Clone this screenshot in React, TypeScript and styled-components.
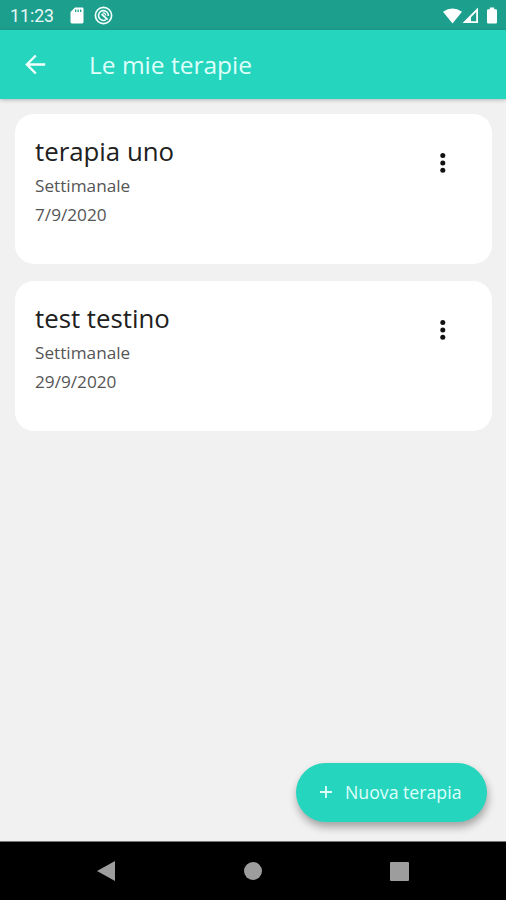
import React from "react";
import styled, { createGlobalStyle } from "styled-components";

const GlobalStyle = createGlobalStyle`
  * { box-sizing: border-box; }
  body { margin: 0; background: #f1f1f1; }
`;

const Screen = styled.div`
  width: 506px;
  height: 900px;
  display: flex;
  flex-direction: column;
  overflow: hidden;
  background: #f1f1f1;
  font-family: "Open Sans", "Noto Sans", sans-serif;
`;

const StatusBar = styled.header`
  height: 30px;
  flex: none;
  display: flex;
  align-items: center;
  justify-content: space-between;
  padding: 1px 8px 0 10px;
  background: #1d9f8e;
  color: #fff;
`;

const StatusGroup = styled.div<{ $gap: number }>`
  display: flex;
  align-items: center;
  gap: ${({ $gap }) => $gap}px;
  svg { display: block; }
`;

const Clock = styled.span`
  width: 50.5px;
  font: 400 17.7px/20px Roboto, sans-serif;
  white-space: nowrap;
  color: #e9f8f5;
`;

const AppBar = styled.div`
  height: 69px;
  flex: none;
  display: flex;
  align-items: center;
  padding-left: 24px;
  background: #26d5be;
  box-shadow: 0 1px 4px rgba(0, 0, 0, 0.26);
  z-index: 1;
`;

const BackButton = styled.button`
  width: 65px;
  height: 24px;
  padding: 0;
  border: 0;
  background: none;
  text-align: left;
  svg { display: block; }
`;

const Title = styled.h1`
  margin: 0;
  font-size: 24.5px;
  line-height: 34px;
  font-weight: 400;
  color: #dffffa;
`;

const Content = styled.main`
  flex: 1;
  display: flex;
  flex-direction: column;
  gap: 17px;
  padding: 15px 14px 19px 15px;
`;

const Card = styled.article`
  height: 150px;
  flex: none;
  display: flex;
  justify-content: space-between;
  padding: 19px 43px 0 20px;
  border-radius: 19px;
  background: #fff;
`;

const CardTitle = styled.h2`
  margin: 0 0 3px;
  font-size: 25.8px;
  line-height: 36px;
  font-weight: 400;
  color: #202020;
`;

const CardLine = styled.p`
  margin: 0;
  font-size: 17.2px;
  line-height: 28.5px;
  color: #555;
`;

const MenuButton = styled.button`
  width: 12px;
  height: 24px;
  margin-top: 18px;
  padding: 0;
  border: 0;
  background: none;
  svg { display: block; }
`;

const AddButton = styled.button`
  width: 191px;
  height: 59px;
  margin: auto 5px 0 auto;
  display: flex;
  align-items: center;
  gap: 13px;
  padding: 0 0 1px 24px;
  border: 0;
  border-radius: 30px;
  background: #26d5be;
  box-shadow: 1px 5px 8px rgba(0, 0, 0, 0.33);
  color: #dffffa;
  font: 500 17.7px/24px "Open Sans", "Noto Sans", sans-serif;
  white-space: nowrap;
`;

const NavBar = styled.nav`
  height: 59px;
  flex: none;
  display: flex;
  justify-content: space-between;
  align-items: center;
  padding: 0 97px;
  border-top: 1px solid #777;
  background: #000;
  svg { display: block; }
`;

const therapies = [
  { name: "terapia uno", frequency: "Settimanale", date: "7/9/2020" },
  { name: "test testino", frequency: "Settimanale", date: "29/9/2020" },
];

const SdCard = () => (
  <svg width="14" height="17" viewBox="0 0 14 17">
    <path fillRule="evenodd" fill="#fff" d="M5 .5h7.3q1.2 0 1.2 1.2v13.4q0 1.4-1.4 1.4H1.9Q.5 16.5.5 15.1V5zM5 2.4v2.7h1.3V2.4zm2.5 0v2.7h1.3V2.4zm2.5 0v2.7h1.3V2.4z" />
  </svg>
);

const DebugIcon = () => (
  <svg width="19" height="19" viewBox="0 0 19 19" fill="none" stroke="#f2fffc">
    <circle cx="9.5" cy="9.5" r="8.1" strokeWidth="1.7" />
    <path d="M11.8 13.8A4.9 4.9 0 1 1 14.3 10" strokeWidth="1.6" />
    <path d="m7.6 8 6 5.6" strokeWidth="1.9" />
    <path d="M8.8 6.9a2.5 2.5 0 0 1 3 2.6" strokeWidth="1.2" />
  </svg>
);

const Wifi = () => (
  <svg width="19" height="16" viewBox="0 0 19 16">
    <path fill="#fff" d="M0 3.7Q9.5-2.8 19 3.7L9.5 15.5z" />
  </svg>
);

const Signal = () => (
  <svg width="17" height="17" viewBox="0 0 17 17">
    <path fillRule="evenodd" fill="#fff" d="M16 .5V16H.5zM14.2 5 9 10.2V14.3h5.2z" />
  </svg>
);

const Battery = () => (
  <svg width="19" height="17" viewBox="-7 0 19 17">
    <path fill="#fff" d="M3.8.5h4.4v1.7h1.6q1.2 0 1.2 1.2v11.9q0 1.2-1.2 1.2H2.2Q1 16.5 1 15.3V3.4q0-1.2 1.2-1.2h1.6z" />
  </svg>
);

const BackArrow = () => (
  <svg width="24" height="24" viewBox="0 0 24 24" fill="none" stroke="#f2fffc" strokeWidth="2.4">
    <path d="M21.2 11.5H3M11.8 2.5 2.9 11.5l8.9 9" />
  </svg>
);

const Dots = () => (
  <svg width="12" height="24" viewBox="0 0 12 24" fill="#111">
    <circle cx="5.8" cy="4.6" r="2.5" />
    <circle cx="5.8" cy="11.9" r="2.5" />
    <circle cx="5.8" cy="19.3" r="2.5" />
  </svg>
);

const Plus = () => (
  <svg width="12" height="12" viewBox="0 0 12 12" stroke="#dffffa" strokeWidth="1.8">
    <path d="M6 0v12M0 6h12" />
  </svg>
);

export default function App() {
  return (
    <Screen>
      <GlobalStyle />
      <StatusBar>
        <StatusGroup $gap={9.5}>
          <Clock>11:23</Clock>
          <SdCard />
          <DebugIcon />
        </StatusGroup>
        <StatusGroup $gap={0}>
          <Wifi />
          <Signal />
          <Battery />
        </StatusGroup>
      </StatusBar>
      <AppBar>
        <BackButton aria-label="Indietro"><BackArrow /></BackButton>
        <Title>Le mie terapie</Title>
      </AppBar>
      <Content>
        {therapies.map((t) => (
          <Card key={t.name}>
            <div>
              <CardTitle>{t.name}</CardTitle>
              <CardLine>{t.frequency}</CardLine>
              <CardLine>{t.date}</CardLine>
            </div>
            <MenuButton aria-label="Opzioni"><Dots /></MenuButton>
          </Card>
        ))}
        <AddButton><Plus />Nuova terapia</AddButton>
      </Content>
      <NavBar>
        <svg width="18" height="22" viewBox="0 0 18 22"><path fill="#9d9d9d" d="M18 1v20L0 11z" /></svg>
        <svg width="18" height="18" viewBox="0 0 18 18"><circle cx="9" cy="9" r="9" fill="#9d9d9d" /></svg>
        <svg width="19" height="19" viewBox="0 0 19 19"><rect width="19" height="19" rx="1" fill="#9d9d9d" /></svg>
      </NavBar>
    </Screen>
  );
}
